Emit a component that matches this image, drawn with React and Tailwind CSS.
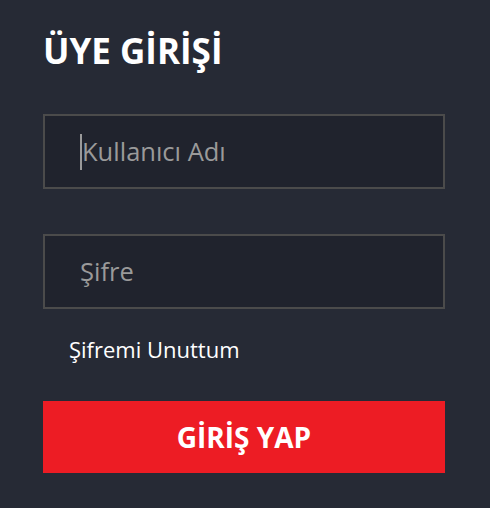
export default function App() {
  return (
    <div className="min-h-[508px] w-[490px] bg-[#262a35] pl-[43px] pr-[45px] pt-[28px]" style={{ fontFamily: "'Open Sans', sans-serif" }}>
      <h1 className="text-[35px] font-bold leading-[46px] text-white">ÜYE GİRİŞİ</h1>

      <div className="mt-[40px] flex h-[75px] items-center border-2 border-[#4b4b4b] bg-[#20232d] pl-[35px]">
        <span className="h-[36px] w-[2px] bg-[#9a9a9a]" />
        <span className="text-[25.5px] text-[#9a9a9a]">Kullanıcı Adı</span>
      </div>

      <div className="mt-[45px] flex h-[75px] items-center border-2 border-[#4b4b4b] bg-[#20232d] pl-[35px]">
        <span className="text-[25.5px] text-[#9a9a9a]">Şifre</span>
      </div>

      <p className="mt-[26px] pl-[26px] text-[22px] leading-[28px] text-white">Şifremi Unuttum</p>

      <button className="mt-[38px] flex h-[72px] w-full items-center justify-center bg-[#ed1c24] text-[28px] font-bold text-white">
        GİRİŞ YAP
      </button>
    </div>
  );
}
